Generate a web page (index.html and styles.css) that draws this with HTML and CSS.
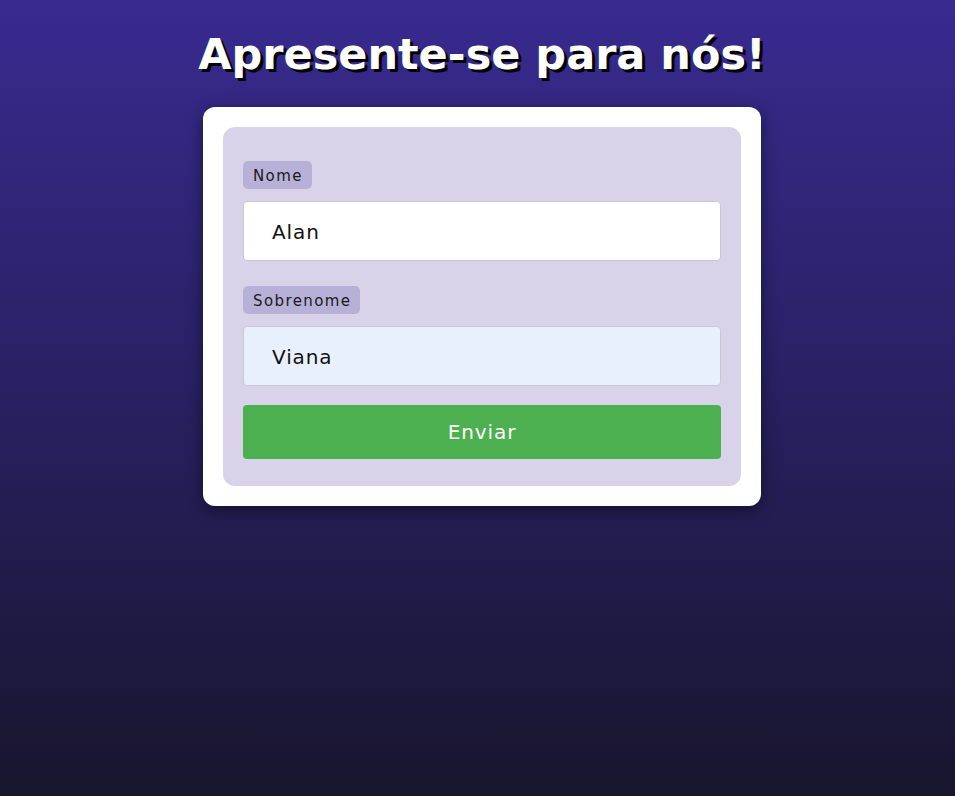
FILE: index.html
```html
<!DOCTYPE html>
<html lang="pt">
<head>
<meta charset="utf-8">
<title>Apresente-se</title>
<link rel="stylesheet" href="styles.css">
</head>
<body>
<main class="page">
  <h1 class="title">Apresente-se para nós!</h1>
  <div class="card">
    <form class="form">
      <label class="tag" for="nome">Nome</label>
      <input class="field" id="nome" type="text" value="Alan">
      <label class="tag" for="sobrenome">Sobrenome</label>
      <input class="field field-filled" id="sobrenome" type="text" value="Viana">
      <button class="submit" type="button">Enviar</button>
    </form>
  </div>
</main>
</body>
</html>
```
FILE: styles.css
```css
html, body {
  margin: 0;
  height: 100%;
}
body {
  background: linear-gradient(to bottom, #382a8f 0%, #2a2166 45%, #18152d 100%);
  font-family: "DejaVu Sans", Verdana, sans-serif;
}
.page {
  display: flex;
  flex-direction: column;
  align-items: center;
  padding-top: 29px;
  padding-left: 9px;
}
.title {
  margin: 0 0 28px;
  font-size: 43px;
  font-weight: bold;
  color: #fff;
  text-shadow: 3px 3px 0 #000;
  line-height: 50px;
}
.card {
  width: 558px;
  box-sizing: border-box;
  background: #fff;
  border-radius: 12px;
  padding: 20px;
  box-shadow: 0 4px 16px rgba(0, 0, 0, 0.45);
}
.form {
  background: #d8d3e8;
  border-radius: 12px;
  padding: 34px 20px 27px;
  display: flex;
  flex-direction: column;
  align-items: flex-start;
}
.tag {
  background: #b7b1d8;
  color: #1a1a1a;
  font-size: 15px;
  letter-spacing: 1.4px;
  line-height: 20px;
  padding: 5px 9px 3px 10px;
  border-radius: 5px;
  margin-bottom: 12px;
}
.field {
  width: 100%;
  box-sizing: border-box;
  height: 60px;
  border: 1px solid #c9c7cf;
  border-radius: 4px;
  background: #fff;
  padding: 2px 28px 0;
  font-family: "DejaVu Sans", Verdana, sans-serif;
  font-size: 20px;
  letter-spacing: 0.9px;
  color: #111;
  margin-bottom: 25px;
}
.field-filled {
  background: #e8f0fe;
  margin-bottom: 19px;
}
.submit {
  width: 100%;
  height: 54px;
  border: none;
  border-radius: 4px;
  background: #4caf50;
  color: #fff;
  font-family: "DejaVu Sans", Verdana, sans-serif;
  font-size: 20px;
  letter-spacing: 0.9px;
}
```
